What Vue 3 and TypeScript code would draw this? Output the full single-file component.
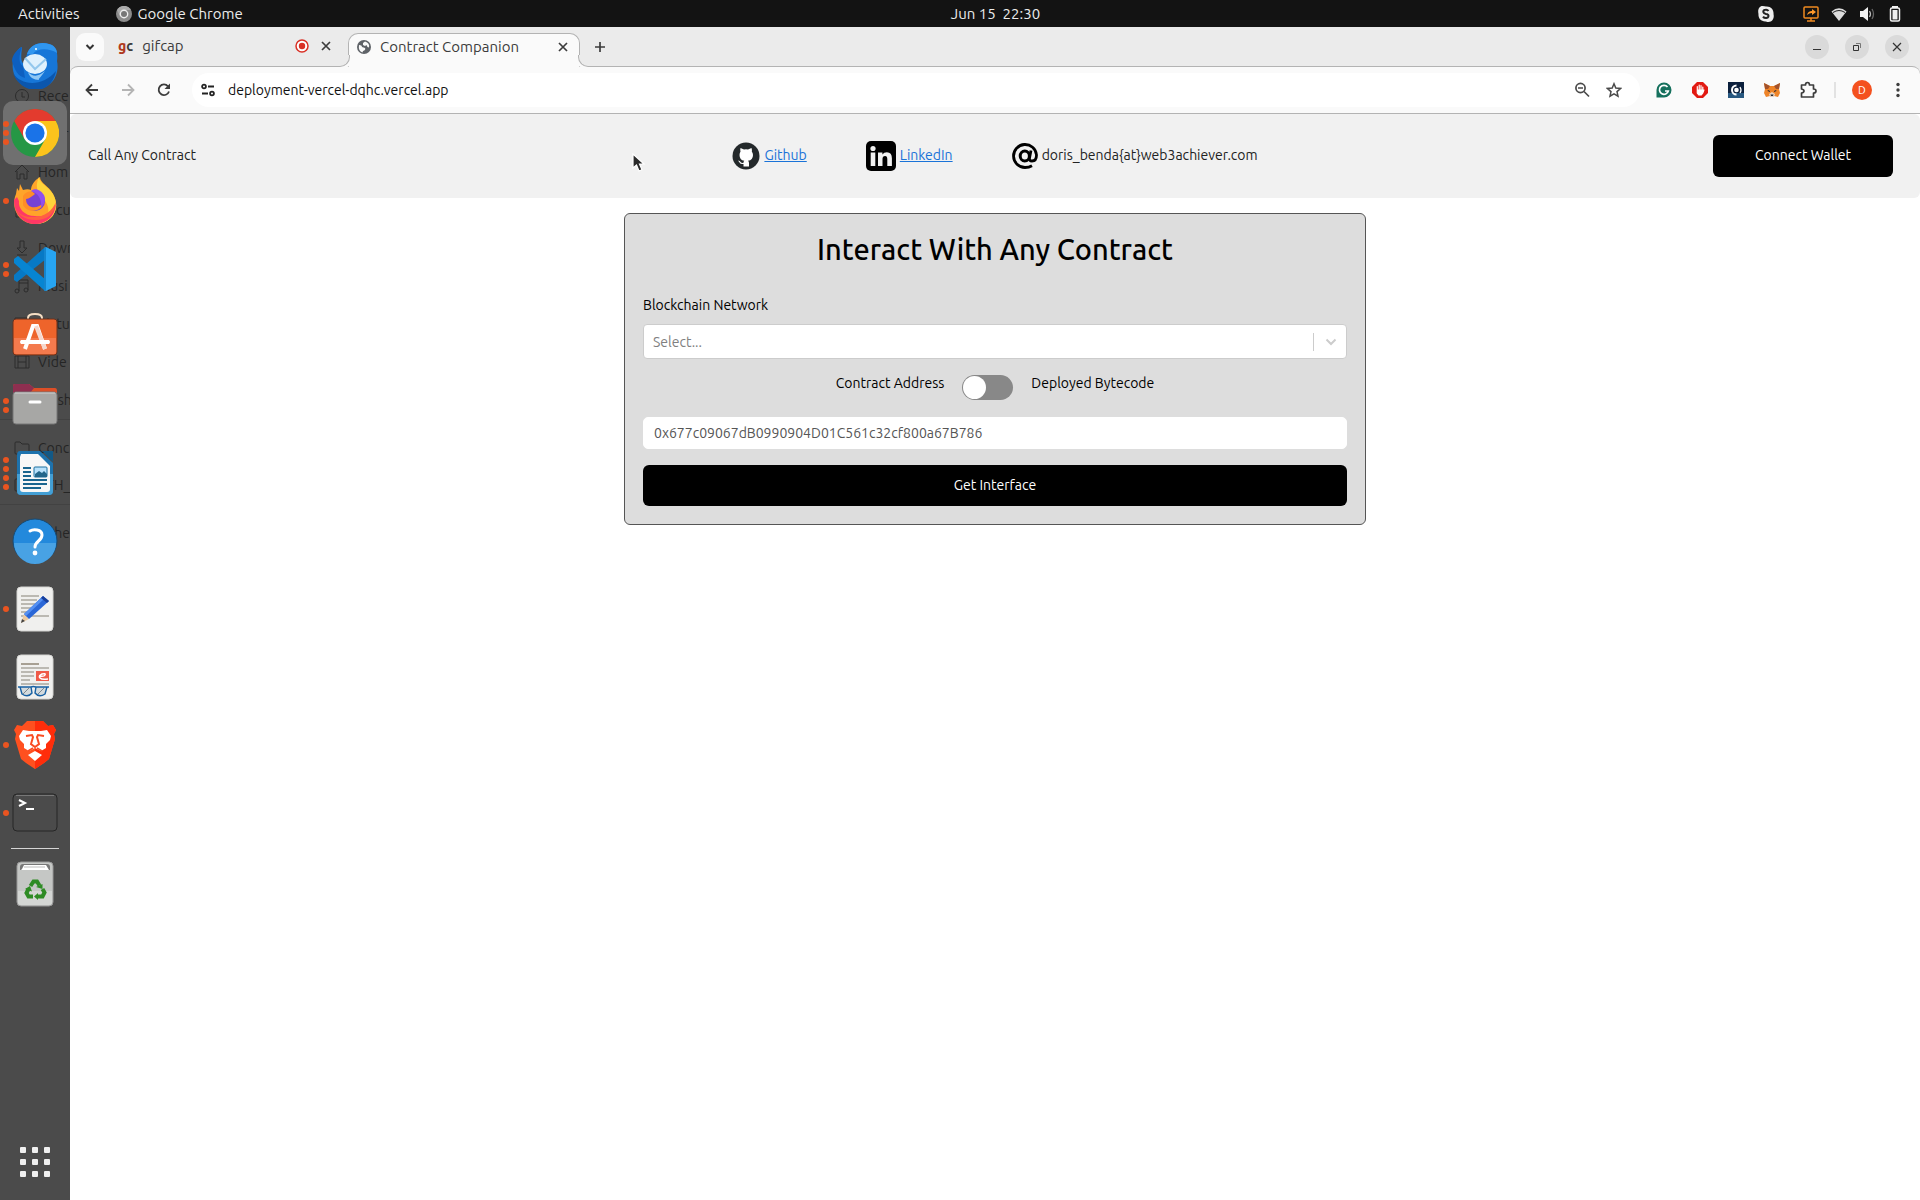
<script setup lang="ts">
import { ref } from 'vue'

interface DockApp {
  name: string
  dots: number
  active?: boolean
  art: string
}

interface Place {
  label: string
  icon: string
  group?: boolean
}

const network = ref('')
const useBytecode = ref(false)
const address = ref('0x677c09067dB0990904D01C561c32cf800a67B786')
const url = ref('deployment-vercel-dqhc.vercel.app')

const places: Place[] = [
  { label: 'Rece', icon: '<circle cx="8" cy="8" r="6.5"/><path d="M8 4v5h3"/>' },
  { label: 'Starr', icon: '<path d="M8 2l2 4 4 1-3 3 1 4-4-2-4 2 1-4-3-3 4-1z"/>' },
  { label: 'Hom', icon: '<path d="M1 8l7-7 7 7M3 7v8h3v-5h4v5h3V7"/>' },
  { label: 'Docu', icon: '<path d="M2 1h8l4 4v10H2z"/>' },
  { label: 'Down', icon: '<path d="M6 1h4v7h3l-5 5-5-5h3zM3 15h10"/>' },
  { label: 'Musi', icon: '<path d="M5 13V2h9v10M5 5h9"/><circle cx="3" cy="13" r="2"/><circle cx="12" cy="12" r="2"/>' },
  { label: 'Pictu', icon: '<path d="M1 2h14v12H1z"/>' },
  { label: 'Vide', icon: '<path d="M1 2h14v12H1zM4 2v12M12 2v12M4 8h8"/>' },
  { label: 'Trash', icon: '<path d="M3 4h10v11H3zM1 4h14"/>' },
  { label: 'Conc', icon: '<path d="M1 3q0-1 1-1h4l2 2h6q1 0 1 1v8q0 1-1 1H2q-1 0-1-1z"/>', group: true },
  { label: 'ETH_', icon: '<path d="M1 3q0-1 1-1h4l2 2h6q1 0 1 1v8q0 1-1 1H2q-1 0-1-1z"/>' },
  { label: 'Othe', icon: '<path d="M8 2v12M2 8h12"/>', group: true },
]

const apps: DockApp[] = [
  {
    name: 'Thunderbird',
    dots: 0,
    art: `<path d="M4 14C-2 26 3 46 23 48 40 49 49 34 46 20 47 13 46 5 38 3 30 0 19 3 16 13c-2 5 2 8-2 10C8 22 11 10 11 6 7 7 6 11 4 14z" fill="#1676d8"/><path d="M1 20c3 10 6 15 13 17l-2-12C7 22 8 14 11 6 5 9 1 15 1 20z" fill="#0d5fc0"/><path d="M16 13C19 3 30 0 38 3c5 1 8 5 8 9-8-5-20-5-24 1z" fill="#3096ef"/><path d="M2 32c8 13 30 14 43-2-5 26-35 24-43 2z" fill="#0b56ad"/><ellipse cx="24" cy="23" rx="12" ry="10" fill="#dff1fd"/><path d="M14 17l10 11 11-10" fill="none" stroke="#94c8ed" stroke-width="2"/><path d="M17 31c5 5 10 5 17-1-4 6-7 8-6 9-5 0-10-3-11-8z" fill="#8fc7f4"/><circle cx="25" cy="8" r="1" fill="#fff"/>`,
  },
  {
    name: 'Google Chrome',
    dots: 3,
    active: true,
    art: `<circle cx="24" cy="24" r="24" fill="#259745"/><path d="M3.2 12A24 24 0 0 1 44.8 12H24L13.6 30z" fill="#e33b2e"/><path d="M44.8 12A24 24 0 0 1 24 48L34.4 30 24 12z" fill="#fcc31c"/><circle cx="24" cy="24" r="12" fill="#fff"/><circle cx="24" cy="24" r="9.6" fill="#1a73e8"/>`,
  },
  {
    name: 'Firefox',
    dots: 1,
    art: `<path d="M9 7l3 6c3-1 6-1 8 0 0-5 4-10 9-13 0 6 9 9 13 17 9 16-2 30-18 30C8 47-1 31 5 17L6 11l2 3z" fill="#ffa42a"/><path d="M28 0c0 6 9 9 14 17 9 17-3 29-16 30 18-9 11-21 4-28-4-4-6-10-2-19z" fill="#ffd43a"/><path d="M3 23c0 14 9 24 21 24 12 0 20-8 21-20-6 12-15 13-21 12C13 39 7 31 8 24l-2-4z" fill="#ff3866"/><path d="M3 27c1 7 8 13 17 13 13 1 21-6 25-15-1 13-10 18-20 18C13 43 5 37 3 27z" fill="#ff6042"/><circle cx="24" cy="24" r="10" fill="#7742d4"/><path d="M12 19c3-5 9-6 12-2-3 2-6 5-9 5 0 10 12 11 18 3-2 9-15 13-21 3z" fill="#ff8e26"/><path d="M20 14c4-4 10-1 13 4 2 5 1 9-3 12 1-8-3-14-10-16z" fill="#9150ec"/>`,
  },
  {
    name: 'Visual Studio Code',
    dots: 2,
    art: `<path d="M33 3L3 30v5l3 2 29-23z" fill="#0779c5"/><path d="M3 14l4-3 28 24-1 11L3 18z" fill="#0785d2"/><path d="M33 3l2-1 10 5v34l-10 5-2-1 1-5V9z" fill="#27a5f2"/><path d="M33 3l2-1v44l-2-1z" fill="#1485ce"/>`,
  },
  {
    name: 'Ubuntu Software',
    dots: 0,
    art: `<path d="M17 7V5q0-4 7-4t7 4v2" fill="none" stroke="#f6dfc5" stroke-width="2"/><rect x="2" y="6" width="44" height="36" rx="3" fill="#ee642b" stroke="#6b321f"/><path d="M3 25h42v14q0 2-2 2H5q-2 0-2-2z" fill="#f47a4d"/><path d="M14 36l8-23h4l8 23M10 29h28" fill="none" stroke="#fff" stroke-width="4"/><path d="M25 13l9 23" stroke="#f5d8ce" stroke-width="4"/><path d="M11 29h26" stroke="#fff" stroke-width="4" stroke-linecap="round"/>`,
  },
  {
    name: 'Files',
    dots: 2,
    art: `<path d="M2 5q0-2 2-2h14l5 4h21q2 0 2 3v15H2z" fill="#dc4f27"/><path d="M2 5q0-2 2-2h14l5 4-4 5H2z" fill="#8e2f50"/><rect x="2" y="11" width="44" height="32" rx="3" fill="#a7a7a5" stroke="#777"/><path d="M4 12h40" stroke="#cfcfcf"/><path d="M19 21h10" stroke="#fff" stroke-width="3" stroke-linecap="round"/>`,
  },
  {
    name: 'LibreOffice Writer',
    dots: 4,
    art: `<path d="M9 2h20l13 12v28q0 4-4 4H10q-4 0-4-4V6q0-4 3-4z" fill="#1d72ad"/><path d="M6 25v17q0 4 4 4h28q4 0 4-4V25z" fill="#439fd5"/><path d="M10 5h17l12 12v23q0 3-3 3H12q-3 0-3-3V8z" fill="#f7f7f7"/><path d="M31 2h11v11z" fill="#125987"/><path d="M12 19h8M12 23h8M12 27h8M12 31h24M12 35h24M12 39h18" stroke="#1a658f" stroke-width="2"/><rect x="23" y="18" width="13" height="10" rx="1" fill="#b8e1fb" stroke="#1d709f"/><path d="M24 28v-3l4-3 3 2 2-2 3 3v3z" fill="#23668a"/>`,
  },
  {
    name: 'Help',
    dots: 0,
    art: `<circle cx="24" cy="24" r="22" fill="#2389dc" stroke="#174a72"/><path d="M3 26h42a21 21 0 0 1-42 0z" fill="#48a2e4"/><path d="M19 14c3-2 12-2 12 4s-7 6-7 12" fill="none" stroke="#fff" stroke-width="3" stroke-linecap="round"/><circle cx="24" cy="36" r="2.4" fill="#fff"/>`,
  },
  {
    name: 'Text Editor',
    dots: 1,
    art: `<rect x="6" y="2" width="36" height="44" rx="4" fill="#f0f0ee" stroke="#d5d5d2"/><path d="M10 11h18M10 15h16M10 19h16M10 23h14M10 27h11M10 31h28" stroke="#bbb9b2" stroke-width="2"/><path d="M10 38l3-9 5 5z" fill="#eac9a0"/><path d="M10 38l1-4 3 2z" fill="#444"/><path d="M13 29l19-18 6 5-20 18z" fill="#2a67d7"/><path d="M13 29l19-18 2 2-19 18z" fill="#5490f2"/><path d="M30 13l2-2 6 5-2 2z" fill="#183f9a"/>`,
  },
  {
    name: 'Document Viewer',
    dots: 0,
    art: `<rect x="6" y="2" width="36" height="44" rx="4" fill="#f0f0ee" stroke="#d5d5d2"/><path d="M10 11h18" stroke="#a7a093" stroke-width="2"/><path d="M10 15h28M10 19h13M10 23h13M10 27h9M10 31h28" stroke="#bbb9b2" stroke-width="2"/><rect x="25" y="18" width="13" height="10" fill="#ef5a48"/><path d="M28 23q5 1 6-1t-3-1q-4 2-2 4t8 1" fill="none" stroke="#fff" stroke-width="1.5"/><path d="M9 34h11l1 6q-4 5-10 1zM36 34H25l-1 6q4 5 10 1zM7 34h13q2-1 5 0h13" fill="#d3dadd" stroke="#1760a3" stroke-width="1.4"/><path d="M12 41l6-6M27 41l6-6" stroke="#7b8790"/>`,
  },
  {
    name: 'Brave',
    dots: 1,
    art: `<path d="M16 0h16l5 5 5-1 3 5-2 4 1 5-6 20-5 4-9 6-9-6-5-4-6-20 1-5-2-4 3-5 5 1z" fill="#ff501f"/><path d="M24 0h8l5 5 5-1 3 5-2 4 1 5-6 20-5 4-9 6z" fill="#ff2d0a"/><path d="M12 9l6 1h12l6-1 4 6-1 4-4 4 0 4-5 3-6-3-6 3-5-3 0-4-4-4-1-4z" fill="#fff"/><path d="M15 15l6-1 1 2-2 7 4 3 4-3-2-7 1-2 6 1" fill="none" stroke="#fa4b21" stroke-width="2"/><path d="M17 30l5-3M31 30l-5-3" stroke="#fa4b21" stroke-width="1.500"/><path d="M24 30l7 4-7 6-7-6z" fill="#fff"/>`,
  },
  {
    name: 'Terminal',
    dots: 1,
    art: `<rect x="2" y="5" width="44" height="37" rx="4" fill="#4b4b4b" stroke="#262626"/><path d="M5 6.5h38" stroke="#777"/><path d="M8 11l6 3-6 3" fill="none" stroke="#fff" stroke-width="2"/><path d="M15 20h8" stroke="#fff" stroke-width="2"/>`,
  },
]

const trashArt = `<rect x="6" y="2" width="36" height="44" rx="4" fill="#c5c7c5" stroke="#989898"/><path d="M7 31h34v11q0 3-3 3H10q-3 0-3-3z" fill="#d4d6d4"/><path d="M9 10V7q0-3 3-3h24q3 0 3 3v3z" fill="#777"/><path d="M11 9l2-4h22l3 5H10z" fill="#fff"/><path d="M13 7h21" stroke="#bbb"/><g fill="none" stroke="#2e8b24" stroke-width="4"><path d="M19.500 26l3-4.500h3.500l2.500 4"/><path d="M31.500 29l2 3.500-2 4H26"/><path d="M22 36.500h-4.500l-2-3.500 2-4"/></g><g fill="#2e8b24"><path d="M25 27l6.500-3v5z"/><path d="M27 33v7l-4-3.500z"/><path d="M14 29l5-3 2 5.500z"/></g>`
</script>

<template>
  <div class="desktop">
    <header class="topbar">
      <div class="topbar-left">
        <button class="plain">Activities</button>
        <button class="plain current-app">
          <svg width="16" height="16" viewBox="0 0 16 16" aria-hidden="true">
            <circle cx="8" cy="8" r="8" fill="#8b8b8b" />
            <path d="M1 4a8 8 0 0 1 14 0H8L4 10z" fill="#aaa" />
            <circle cx="8" cy="8" r="4.400" fill="#eee" />
            <circle cx="8" cy="8" r="3" fill="#777" />
          </svg>
          Google Chrome
        </button>
      </div>
      <time class="clock">Jun 15&nbsp; 22:30</time>
      <div class="tray">
        <svg class="skype" width="16" height="16" viewBox="0 0 16 16">
          <path d="M4.500 0Q7 0 8 .5C13 0 16 4 15.500 8c1 4-1 8-5 8Q9 16 8 15.500C3 16 0 12 .5 8-.5 4 1 0 4.500 0z" fill="#eee" />
          <path d="M10.500 5q-1-1.500-3-1.200Q5.200 4 5.300 6q.4 1.500 2.700 2 2.500.3 2.500 2-.2 2-2.500 2.100-2 0-3-1.500" fill="none" stroke="#222" stroke-width="2" />
        </svg>
        <svg width="16" height="16" viewBox="0 0 16 16">
          <rect x="1" y="1" width="14" height="11" rx="1" fill="none" stroke="#f08a20" stroke-width="1.500" />
          <path d="M4 15h8M8 12v3" stroke="#f08a20" stroke-width="1.500" />
          <path d="M4 9q1-4 5-4V3l4 3-4 3V7Q6 7 4 9z" fill="#ff9a2b" />
        </svg>
        <svg width="16" height="16" viewBox="0 0 16 16">
          <path d="M.5 5.500Q8-1 15.500 5.500L8 15z" fill="#ddd" />
          <path d="M2 6.500q6-4 12 0" fill="none" stroke="#222" stroke-width="1" />
        </svg>
        <svg width="16" height="16" viewBox="0 0 16 16">
          <path d="M1 5h3l5-4v14l-5-4H1z" fill="#f2f2f2" />
          <path d="M10.500 5q2 3 0 6" fill="none" stroke="#bbb" stroke-width="1.300" />
          <path d="M13 3q3 5 0 10" fill="none" stroke="#666" stroke-width="1.300" />
        </svg>
        <svg width="16" height="16" viewBox="0 0 16 16">
          <path d="M6 2V1h4v1" fill="none" stroke="#f2f2f2" stroke-width="2" />
          <rect x="3.500" y="2" width="9" height="13" rx="1.500" fill="none" stroke="#f2f2f2" stroke-width="1.500" />
          <rect x="5.500" y="4" width="5" height="9.500" fill="#f2f2f2" />
        </svg>
      </div>
    </header>

    <div class="workspace">
      <aside class="dock">
        <ul class="places" aria-hidden="true">
          <li v-for="place in places" :key="place.label" :class="{ group: place.group }">
            <svg width="16" height="16" viewBox="0 0 16 16" v-html="place.icon"></svg>
            <span>{{ place.label }}</span>
          </li>
        </ul>
        <nav class="launchers" aria-label="Dock">
          <div v-for="app in apps" :key="app.name" class="launcher" :class="{ active: app.active }">
            <span class="dots"><i v-for="n in app.dots" :key="n"></i></span>
            <button class="plain tile" :aria-label="app.name">
              <svg width="48" height="48" viewBox="0 0 48 48" v-html="app.art"></svg>
            </button>
          </div>
          <hr class="rule" />
          <div class="launcher">
            <span class="dots"></span>
            <button class="plain tile" aria-label="Trash">
              <svg width="48" height="48" viewBox="0 0 48 48" v-html="trashArt"></svg>
            </button>
          </div>
        </nav>
        <button class="plain app-grid" aria-label="Show applications"><i v-for="n in 9" :key="n"></i></button>
      </aside>

      <div class="browser">
        <div class="tabstrip">
          <button class="plain tab-search" aria-label="Search tabs">
            <svg width="10" height="10" viewBox="0 0 10 10"><path d="M1.500 3L5 6.500 8.500 3" fill="none" stroke="#333" stroke-width="2" /></svg>
          </button>
          <div class="tab">
            <span class="gc"><b>g</b>c</span>
            <span class="tab-title">gifcap</span>
            <svg width="14" height="14" viewBox="0 0 14 14"><circle cx="7" cy="7" r="6" fill="#fff" stroke="#d93025" stroke-width="1.500" /><circle cx="7" cy="7" r="3.200" fill="#d93025" /></svg>
            <button class="plain tab-close" aria-label="Close tab">
              <svg width="10" height="10" viewBox="0 0 10 10"><path d="M1 1l8 8M9 1L1 9" stroke="#3c3c3c" stroke-width="1.700" /></svg>
            </button>
          </div>
          <div class="tab selected">
            <svg width="14" height="14" viewBox="0 0 14 14"><circle cx="7" cy="7" r="7" fill="#5f6368" /><path d="M2 5q3 0 3 2l3 1q1 2-2 3l-.5 1.500Q1 11 2 5zM8 1.500L6 3v2l2 1 1.500-1 1 2 1.500.5Q13 3 8 1.500z" fill="#fafafa" /></svg>
            <span class="tab-title">Contract Companion</span>
            <button class="plain tab-close" aria-label="Close tab">
              <svg width="10" height="10" viewBox="0 0 10 10"><path d="M1 1l8 8M9 1L1 9" stroke="#3c3c3c" stroke-width="1.700" /></svg>
            </button>
          </div>
          <button class="plain new-tab" aria-label="New tab">
            <svg width="12" height="12" viewBox="0 0 12 12"><path d="M6 1v10M1 6h10" stroke="#3c3c3c" stroke-width="1.700" /></svg>
          </button>
          <div class="window-controls">
            <button class="plain" aria-label="Minimize"><svg width="10" height="10" viewBox="0 0 10 10"><path d="M1 7.500h8" stroke="#333" stroke-width="1" /></svg></button>
            <button class="plain" aria-label="Restore"><svg width="10" height="10" viewBox="0 0 10 10" fill="none"><path d="M1.500 3.500h5v5h-5z" stroke="#333" /><path d="M4 1.500h4.500V6" stroke="#777" /></svg></button>
            <button class="plain" aria-label="Close"><svg width="10" height="10" viewBox="0 0 10 10"><path d="M1 1l8 8M9 1L1 9" stroke="#333" stroke-width="1.200" /></svg></button>
          </div>
        </div>

        <div class="toolbar">
          <button class="plain nav-btn" aria-label="Back"><svg width="16" height="16" viewBox="0 0 16 16"><path d="M14 8H3M8 2.500L2.500 8 8 13.500" fill="none" stroke="#3c3c3c" stroke-width="1.800" /></svg></button>
          <button class="plain nav-btn" aria-label="Forward"><svg width="16" height="16" viewBox="0 0 16 16"><path d="M2 8h11M8 2.500L13.500 8 8 13.500" fill="none" stroke="#b4b4b4" stroke-width="1.800" /></svg></button>
          <button class="plain nav-btn" aria-label="Reload"><svg width="16" height="16" viewBox="0 0 16 16"><path d="M13 9.500A5.300 5.300 0 1 1 12 4.300" fill="none" stroke="#3c3c3c" stroke-width="1.800" /><path d="M14 1.500V7H8.500z" fill="#3c3c3c" /></svg></button>
          <form class="omnibox" @submit.prevent>
            <button type="button" class="plain omni-btn" aria-label="Site information"><svg width="14" height="14" viewBox="0 0 14 14" fill="none" stroke="#222" stroke-width="1.800"><circle cx="3" cy="3.500" r="1.900" /><path d="M7 3.500h6M1 10.500h6" /><circle cx="11" cy="10.500" r="1.900" /></svg></button>
            <input v-model="url" class="url" aria-label="Address" spellcheck="false" />
            <button type="button" class="plain omni-btn" aria-label="Zoom"><svg width="16" height="16" viewBox="0 0 16 16" fill="none" stroke="#4a4a4a" stroke-width="1.700"><circle cx="6.500" cy="6" r="4.600" /><path d="M10 9.500l5 5M4 6h5" /></svg></button>
            <button type="button" class="plain omni-btn" aria-label="Bookmark"><svg width="16" height="16" viewBox="0 0 16 16"><path d="M8 1.800l1.800 4.300 4.700.4L11 9.600l1 4.600-4-2.400-4 2.400 1-4.600-3.500-3.100 4.700-.4z" fill="none" stroke="#4a4a4a" stroke-width="1.500" /></svg></button>
          </form>
          <div class="extensions">
            <button class="plain ext" aria-label="Grammarly"><svg width="16" height="16" viewBox="0 0 16 16"><path d="M8 .5A7.500 7.500 0 1 1 8 15.500H.5V8A7.500 7.500 0 0 1 8 .5z" fill="#15705d" /><path d="M11.500 5A4.500 4.500 0 1 0 12.300 9H9" fill="none" stroke="#fff" stroke-width="1.700" /></svg></button>
            <button class="plain ext" aria-label="AdBlock"><svg width="16" height="16" viewBox="0 0 16 16"><path d="M5 0h6l5 5v6l-5 5H5l-5-5V5z" fill="#e21a12" /><path d="M5.300 9V4.500M7.200 8V3M9 8V3.500M10.800 9V5M5.300 8v3l1.500 2h2.500l1.500-2 1-2.500V8h-6z" fill="#fff" stroke="#fff" stroke-width="1.200" stroke-linecap="round" /></svg></button>
            <button class="plain ext" aria-label="Companion"><svg width="16" height="16" viewBox="0 0 16 16"><path d="M0 0h16v16H0z" fill="#0b1f3c" /><path d="M0 11h16v5H0z" fill="#285880" /><path d="M8.500 3.500a4.500 4.500 0 1 0 0 9" fill="none" stroke="#fff" stroke-width="2" /><circle cx="8.500" cy="8" r="2.300" fill="#fff" /><path d="M12 5q2 3 0 6" fill="none" stroke="#fff" stroke-width="1.300" /></svg></button>
            <button class="plain ext" aria-label="MetaMask"><svg width="16" height="16" viewBox="0 0 16 16"><path d="M0 1l6 3h4l6-3-1 6 1 4-2 4-4-1-2 1-2-1-4 1-2-4 1-4z" fill="#ee8428" /><path d="M0 1l6 3-2 3H1zM16 1l-6 3 2 3h3z" fill="#a3522b" /><path d="M5 12l3-2 3 2-1 3H6z" fill="#e8d2c0" /><path d="M4 8l2 1v1L3.500 9zM12 8l-2 1v1l2.500-1zM6.500 12.500h3L9 14H7z" fill="#292b33" /></svg></button>
            <button class="plain ext" aria-label="Extensions"><svg width="18" height="18" viewBox="0 0 18 18"><path d="M2.500 4h4q0-2.500 2-2.500t2 2.500h4v4q2.500 0 2.500 2t-2.500 2v4h-12v-4q2.500-.5 2.500-2t-2.500-2z" fill="none" stroke="#3c3c3c" stroke-width="1.700" stroke-linejoin="round" /></svg></button>
            <span class="divider"></span>
            <button class="avatar" aria-label="Profile">D</button>
            <button class="plain ext" aria-label="Menu"><svg width="16" height="16" viewBox="0 0 16 16" fill="#3c3c3c"><circle cx="8" cy="2.500" r="1.700" /><circle cx="8" cy="8" r="1.700" /><circle cx="8" cy="13.500" r="1.700" /></svg></button>
          </div>
        </div>

        <main class="page">
          <header class="site-header">
            <span class="brand">Call Any Contract</span>
            <div class="contacts">
              <div class="contact">
                <svg width="28" height="28" viewBox="0 0 28 28"><circle cx="14" cy="14" r="13.500" fill="#24292b" /><path d="M8.500 6l3.500 1.500q2-.5 4 0L19.500 6q.8 2 .3 3.500 1.200 1.500 1.200 3.500 0 5-5 5.800 1 1 1 2.200v3.500h-5.500V22q-3 .5-4-1.500L6 18.500q2 0 3 2 1 .7 2.500.3 0-1.300.8-2Q7.500 18 7.500 13q0-2 1-3.500Q8 8 8.500 6z" fill="#fff" /></svg>
                <a href="#github">Github</a>
              </div>
              <div class="contact">
                <svg width="30" height="30" viewBox="0 0 30 30"><rect width="30" height="30" rx="5" fill="#000" /><circle cx="7" cy="7.500" r="2.600" fill="#f1f1f1" /><path d="M4.700 11.500h4.600V25H4.700zM12 11.500h4.400v2q1.500-2.300 4.500-2.300 5 0 5 6V25h-4.600v-7q0-3-2.200-3-2.600 0-2.600 3v7H12z" fill="#f1f1f1" /></svg>
                <a href="#linkedin">LinkedIn</a>
              </div>
              <div class="contact">
                <svg width="26" height="26" viewBox="0 0 26 26" fill="none" stroke="#000"><path d="M20 22.800Q17 24.500 13 24.500A11.500 11.500 0 1 1 24.500 12q0 6-4.500 6-3 0-2.500-3L19 7.500" stroke-width="2.800" /><ellipse cx="12.800" cy="13" rx="4.600" ry="5" stroke-width="3" /></svg>
                <span>doris_benda{at}web3achiever.com</span>
              </div>
            </div>
            <button class="black-btn connect">Connect Wallet</button>
          </header>

          <form class="card" @submit.prevent>
            <h1>Interact With Any Contract</h1>
            <label for="network" class="field-label">Blockchain Network</label>
            <div class="select-box">
              <select id="network" v-model="network">
                <option value="">Select...</option>
              </select>
              <span class="indicator">
                <svg width="12" height="8" viewBox="0 0 12 8"><path d="M1.500 1.500L6 6l4.500-4.500" fill="none" stroke="#ccc" stroke-width="2" /></svg>
              </span>
            </div>
            <div class="mode">
              <label for="mode">Contract Address</label>
              <input id="mode" v-model="useBytecode" type="checkbox" class="switch" role="switch" />
              <label for="mode">Deployed Bytecode</label>
            </div>
            <input v-model="address" class="address" aria-label="Contract address" spellcheck="false" />
            <button type="submit" class="black-btn submit">Get Interface</button>
          </form>
        </main>
      </div>
    </div>

    <svg class="cursor" width="14" height="20" viewBox="0 0 14 20" aria-hidden="true">
      <path d="M1 1v14l3.500-3 2.500 6 3-1.300-2.500-5.700H12z" fill="#2b2b2b" stroke="#fff" stroke-width="1.200" />
    </svg>
  </div>
</template>

<style>
body {
  margin: 0;
  background: #fff;
}
</style>

<style scoped>
* {
  box-sizing: border-box;
}

.desktop {
  position: relative;
  min-height: 100vh;
  display: flex;
  flex-direction: column;
  font-family: Ubuntu, "Noto Sans", sans-serif;
  font-size: 14px;
  line-height: 20px;
  color: #222;
  overflow: hidden;
}

button,
input,
select {
  font: inherit;
  color: inherit;
}

svg {
  display: block;
  flex: none;
}

.plain {
  display: flex;
  align-items: center;
  justify-content: center;
  padding: 0;
  border: 0;
  background: none;
}

/* System bar */
.topbar {
  display: grid;
  grid-template-columns: 1fr auto 1fr;
  align-items: center;
  height: 27px;
  padding: 0 17px 0 18px;
  background: #131313;
  color: #ececec;
  font-size: 15px;
}

.topbar-left {
  display: flex;
  gap: 36px;
}

.current-app {
  gap: 6px;
}

.clock {
  padding-left: 70px;
}

.tray {
  display: flex;
  justify-content: flex-end;
  gap: 12px;
}

.skype {
  margin-right: 17px;
}

.workspace {
  flex: 1;
  display: flex;
}

/* Dock */
.dock {
  position: relative;
  flex: none;
  width: 70px;
  display: flex;
  flex-direction: column;
  justify-content: space-between;
  padding: 4px 0 23px;
  background: #4b4b4b;
  overflow: hidden;
}

.places {
  position: absolute;
  top: 50px;
  left: 0;
  width: 70px;
  margin: 0;
  padding: 0;
  list-style: none;
  color: #252525;
}

.places li {
  display: flex;
  align-items: center;
  gap: 8px;
  height: 38px;
  padding-left: 14px;
}

.places li.group {
  height: 47px;
  padding-top: 9px;
  border-top: 1px solid #424242;
}

.places svg {
  fill: none;
  stroke: #2c2c2c;
}

.launchers {
  position: relative;
}

.launcher {
  display: grid;
  grid-template-columns: 3px 64px;
  align-items: center;
  height: 68px;
}

.dots {
  position: relative;
  z-index: 1;
  display: flex;
  flex-direction: column;
  gap: 3px;
  padding-left: 3px;
}

.dots i {
  width: 6px;
  height: 6px;
  border-radius: 3px;
  background: #e95420;
}

.tile {
  width: 64px;
  height: 64px;
  border-radius: 10px;
}

.active .tile {
  background: #707070;
}

.rule {
  height: 1px;
  margin: 1px 11px;
  border: 0;
  background: #d5d5d5;
}

.app-grid {
  display: grid;
  grid-template-columns: repeat(3, 6px);
  gap: 6px;
}

.app-grid i {
  height: 6px;
  border-radius: 1px;
  background: #f0f0f0;
}

/* Browser chrome */
.browser {
  flex: 1;
  min-width: 0;
  display: flex;
  flex-direction: column;
  background: #ebebeb;
}

.tabstrip {
  display: flex;
  align-items: center;
  height: 39px;
  padding: 6px 11px 0 6px;
}

.tab-search {
  width: 28px;
  height: 28px;
  margin-bottom: 5px;
  border-radius: 9px;
  background: #fafafa;
}

.tab {
  display: flex;
  align-items: center;
  width: 232px;
  height: 33px;
  padding: 0 8px 7px;
  color: #3c3c3c;
}

.tab:not(.selected) {
  width: 244px;
  padding-left: 14px;
  padding-right: 14px;
}

.tab-title {
  flex: 1;
  padding-left: 9px;
  font-size: 15px;
  white-space: nowrap;
}

.tab-close {
  width: 16px;
  height: 16px;
  margin-left: 9px;
}

.gc {
  font-weight: 700;
  font-size: 14px;
}

.gc b {
  color: #b03a20;
}

.selected {
  position: relative;
  height: 34px;
  margin-bottom: -1px;
  border: 1px solid #b3b3b3;
  border-bottom: 0;
  border-radius: 10px 10px 0 0;
  background: #fafafa;
}

.selected::before,
.selected::after {
  content: "";
  position: absolute;
  bottom: 0;
  width: 11px;
  height: 11px;
  border-bottom: 1px solid #b3b3b3;
  background: #ebebeb;
}

.selected::before {
  left: -11px;
  border-right: 1px solid #b3b3b3;
  border-bottom-right-radius: 10px;
  box-shadow: 2px 2px 0 #fafafa;
}

.selected::after {
  right: -11px;
  border-left: 1px solid #b3b3b3;
  border-bottom-left-radius: 10px;
  box-shadow: -2px 2px 0 #fafafa;
}

.new-tab {
  width: 28px;
  height: 28px;
  margin: 0 0 5px 6px;
}

.window-controls {
  display: flex;
  gap: 16px;
  margin: 0 0 5px auto;
}

.window-controls button {
  width: 24px;
  height: 24px;
  border-radius: 12px;
  background: #dadada;
}

.toolbar {
  display: flex;
  align-items: center;
  height: 48px;
  padding: 0 8px 0 4px;
  border: solid #b3b3b3;
  border-width: 1px 0;
  border-radius: 8px 8px 0 0;
  background: #fafafa;
}

.nav-btn {
  width: 36px;
  height: 34px;
}

.omnibox {
  flex: 1;
  display: flex;
  align-items: center;
  height: 34px;
  margin: 0 6px 0 10px;
  padding: 0 10px 0 0;
  border-radius: 17px;
  background: #fff;
}

.url {
  flex: 1;
  min-width: 0;
  padding: 0 0 0 4px;
  border: 0;
  outline: 0;
  background: none;
  color: #111;
}

.omni-btn {
  width: 32px;
  height: 32px;
}

.extensions {
  display: flex;
  align-items: center;
}

.ext {
  width: 36px;
  height: 34px;
}

.ext:last-child {
  width: 28px;
}

.divider {
  width: 2px;
  height: 16px;
  margin: 0 16px 0 8px;
  background: #e2e2e2;
}

.avatar {
  width: 20px;
  height: 20px;
  margin-right: 12px;
  padding: 0;
  border: 0;
  border-radius: 10px;
  background: #f4511e;
  color: #fff;
  font-size: 11px;
  line-height: 20px;
}

/* Page */
.page {
  flex: 1;
  display: flex;
  flex-direction: column;
  align-items: center;
  gap: 15px;
  background: #fff;
}

.site-header {
  align-self: stretch;
  display: grid;
  grid-template-columns: 1fr auto 1fr;
  align-items: center;
  height: 84px;
  border-radius: 6px;
  background: #f1f1f1;
}

.brand,
.contact a,
.contact span {
  padding-bottom: 2px;
}

.brand {
  padding-left: 18px;
}

.contacts {
  display: flex;
  gap: 59px;
}

.contact {
  display: flex;
  align-items: center;
  gap: 4px;
}

.contact a {
  color: #1a73d8;
}

.black-btn {
  padding: 0 0 2px;
  border: 0;
  border-radius: 6px;
  background: #000;
  color: #fff;
}

.connect {
  justify-self: end;
  width: 180px;
  height: 42px;
  margin-right: 27px;
}

.card {
  display: flex;
  flex-direction: column;
  width: 40%;
  min-width: 742px;
  padding: 18px;
  border: 1px solid #555;
  border-radius: 6px;
  background: #ddd;
  color: #000;
}

h1 {
  margin: 0 0 29px;
  font-size: 29px;
  font-weight: 500;
  line-height: 34px;
  text-align: center;
}

.field-label {
  margin: 0 0 9px;
}

.select-box {
  display: grid;
  height: 35px;
}

.select-box > * {
  grid-area: 1 / 1;
}

select {
  appearance: none;
  padding: 0 48px 0 9px;
  border: 1px solid #ccc;
  border-radius: 4px;
  background: #fff;
  color: #808080;
}

.indicator {
  display: flex;
  align-items: center;
  justify-content: center;
  justify-self: end;
  align-self: center;
  width: 34px;
  height: 18px;
  border-left: 1px solid #ccc;
  pointer-events: none;
}

.mode {
  display: flex;
  justify-content: center;
  gap: 18px;
  margin: 14px 0 17px;
}

.switch {
  appearance: none;
  width: 51px;
  height: 25px;
  margin: 2px 0 0;
  padding: 1px;
  border-radius: 13px;
  background: #888;
}

.switch::before {
  content: "";
  display: block;
  width: 23px;
  height: 23px;
  border-radius: 12px;
  background: #fff;
}

.switch:checked::before {
  margin-left: auto;
}

.address {
  height: 32px;
  margin: 0 0 16px;
  padding: 0 10px;
  border: 1px solid #fff;
  border-radius: 5px;
  background: #fff;
  color: #555;
}

.submit {
  height: 41px;
}

.cursor {
  position: absolute;
  top: 153px;
  left: 632px;
}
</style>
